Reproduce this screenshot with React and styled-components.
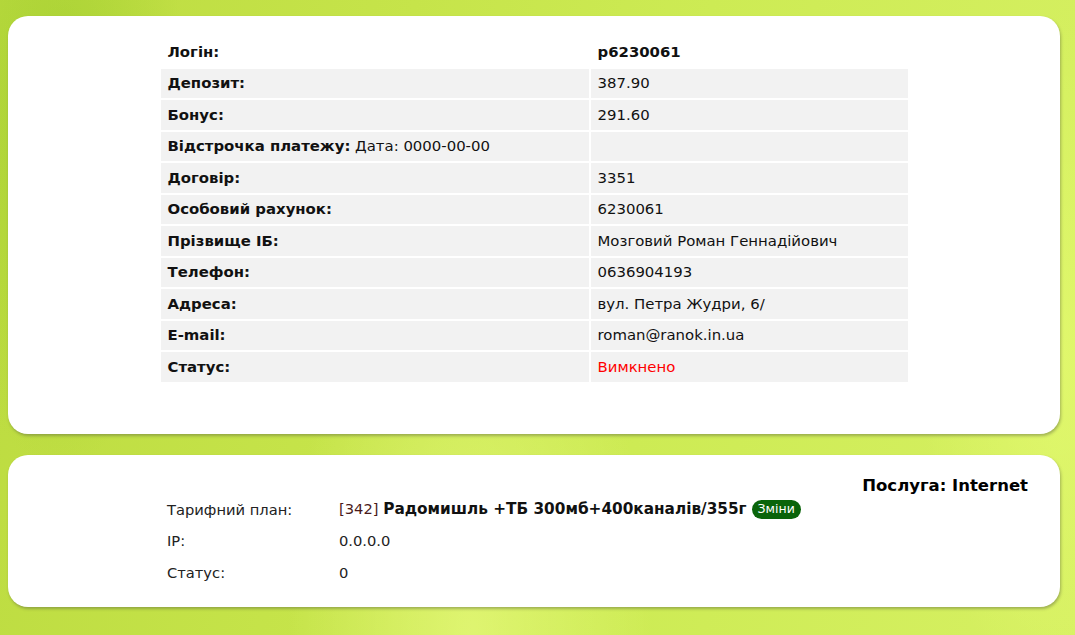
import React from 'react';
import styled, { createGlobalStyle } from 'styled-components';

const account = [
  { label: 'Депозит:', value: '387.90' },
  { label: 'Бонус:', value: '291.60' },
  { label: 'Відстрочка платежу:', extra: 'Дата: 0000-00-00', value: '' },
  { label: 'Договір:', value: '3351' },
  { label: 'Особовий рахунок:', value: '6230061' },
  { label: 'Прізвище ІБ:', value: 'Мозговий Роман Геннадійович' },
  { label: 'Телефон:', value: '0636904193' },
  { label: 'Адреса:', value: 'вул. Петра Жудри, 6/' },
  { label: 'E-mail:', value: 'roman@ranok.in.ua' },
  { label: 'Статус:', value: 'Вимкнено', off: true },
];

const GlobalStyle = createGlobalStyle`
  html, body {
    margin: 0;
    padding: 0;
  }
  body {
    min-height: 635px;
    font-family: "DejaVu Sans", Verdana, sans-serif;
    font-size: 14.7px;
    color: #111;
    background:
      radial-gradient(ellipse 180px 500px at 60px 120px, rgba(150, 200, 40, 0.55), transparent 70%),
      radial-gradient(ellipse 260px 600px at 470px 640px, rgba(240, 255, 140, 0.55), transparent 70%),
      radial-gradient(ellipse 200px 500px at 1060px 360px, rgba(235, 255, 120, 0.5), transparent 70%),
      linear-gradient(100deg, #bcdb40 0%, #c6e44a 35%, #cdeb54 60%, #d6f062 100%);
  }
`;

const Page = styled.div`
  display: flex;
  flex-direction: column;
  gap: 21px;
  padding: 16px 15px 28px 8px;
`;

const Card = styled.section`
  background: #fff;
  border-radius: 20px;
  box-shadow: 1px 2px 3px rgba(90, 100, 60, 0.45);
  padding: ${p => p.$pad};
`;

const InfoTable = styled.table`
  width: 751px;
  margin: 0 auto;
  border-collapse: separate;
  border-spacing: 2px;
  font-family: "DejaVu Sans", Verdana, sans-serif;
  font-size: 14.9px;
`;

const Row = styled.tr`
  height: 29.5px;
`;

const Cell = styled.td`
  padding: 0 0 0 7px;
  background: ${p => (p.$plain ? 'transparent' : '#f2f2f2')};
  font-weight: ${p => (p.$bold ? 'bold' : 'normal')};
  color: ${p => (p.$off ? '#ff0000' : '#111')};
  width: ${p => p.$w || 'auto'};
  white-space: nowrap;
`;

const Light = styled.span`
  font-weight: normal;
`;

const ServiceTitle = styled.h3`
  margin: 0;
  text-align: right;
  font-size: 16.5px;
  font-weight: bold;
  color: #000;
`;

const ServiceGrid = styled.div`
  display: grid;
  grid-template-columns: 172px auto;
  grid-auto-rows: 31.5px;
  align-items: center;
  margin: -1px 0 0 159px;
  color: #222;
`;

const Code = styled.span`
  color: #4a1a1a;
`;

const Plan = styled.b`
  color: #111;
  font-size: 15.3px;
`;

const Badge = styled.span`
  display: inline-block;
  margin-left: 5px;
  padding: 1px 6px 2px;
  border-radius: 10px;
  background: #0a640a;
  color: #fff;
  font-size: 12.5px;
  line-height: 16px;
  vertical-align: 1px;
`;

export default function App() {
  return (
    <>
      <GlobalStyle />
      <Page>
        <Card $pad="19px 0 50px">
          <InfoTable>
            <tbody>
              <Row>
                <Cell $plain $bold $w="421px">Логін:</Cell>
                <Cell $plain $bold>p6230061</Cell>
              </Row>
              {account.map(r => (
                <Row key={r.label}>
                  <Cell $bold>
                    {r.label}
                    {r.extra && <Light> {r.extra}</Light>}
                  </Cell>
                  <Cell $off={r.off}>{r.value}</Cell>
                </Row>
              ))}
            </tbody>
          </InfoTable>
        </Card>
        <Card $pad="21px 32px 19px 0">
          <ServiceTitle>Послуга: Internet</ServiceTitle>
          <ServiceGrid>
            <span>Тарифний план:</span>
            <span>
              <Code>[342]</Code> <Plan>Радомишль +ТБ 300мб+400каналів/355г</Plan>
              <Badge>Зміни</Badge>
            </span>
            <span>IP:</span>
            <span>0.0.0.0</span>
            <span>Статус:</span>
            <span>0</span>
          </ServiceGrid>
        </Card>
      </Page>
    </>
  );
}
